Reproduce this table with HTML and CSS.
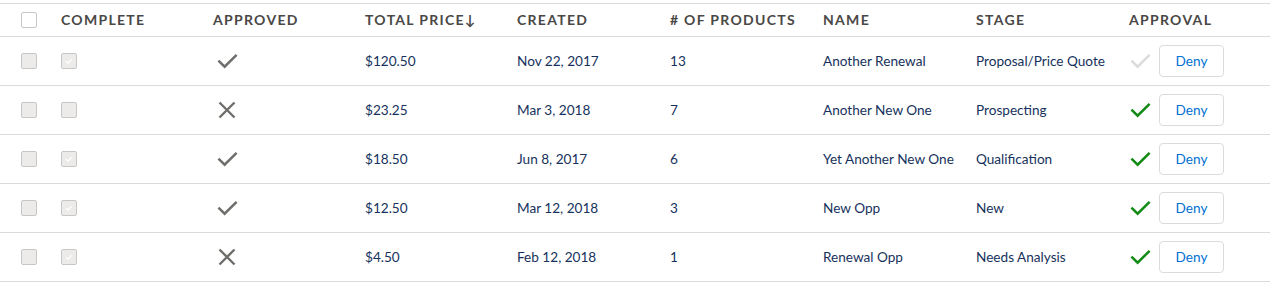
FILE: index.html
```html
<!DOCTYPE html>
<html>
<head>
<meta charset="utf-8">
<link rel="stylesheet" href="styles.css">
</head>
<body>
<table class="grid">
  <colgroup>
    <col class="c-sel"><col class="c-std"><col class="c-std"><col class="c-std"><col class="c-w"><col class="c-w"><col class="c-w"><col class="c-w"><col>
  </colgroup>
  <thead>
    <tr>
      <th class="sel"><span class="cb cb-head"></span></th>
      <th>Complete</th>
      <th>Approved</th>
      <th>Total Price<span class="arrow">↓</span></th>
      <th>Created</th>
      <th># of Products</th>
      <th>Name</th>
      <th>Stage</th>
      <th>Approval</th>
    </tr>
  </thead>
  <tbody>
    <tr>
      <td class="sel"><span class="cb cb-dis"></span></td>
      <td class="ic"><span class="cb cb-dis cb-checked"><svg viewBox="0 0 16 16"><path d="M4.5 8.2l2.3 2.2 4.7-4.6" /></svg></span></td>
      <td class="ic"><svg class="ico-check" viewBox="0 0 24 16"><path d="M2.5 7.5l6.5 6.5L21.5 1.5"/></svg></td>
      <td>$120.50</td>
      <td>Nov 22, 2017</td>
      <td>13</td>
      <td>Another Renewal</td>
      <td>Proposal/Price Quote</td>
      <td class="ic"><div class="appr"><svg class="ico-check light" viewBox="0 0 24 16"><path d="M2.5 7.5l6.5 6.5L21.5 1.5"/></svg><button class="btn">Deny</button></div></td>
    </tr>
    <tr>
      <td class="sel"><span class="cb cb-dis"></span></td>
      <td class="ic"><span class="cb cb-dis"></span></td>
      <td class="ic"><svg class="ico-x" viewBox="0 0 18 18"><path d="M1.5 1.5l15 15M16.5 1.5l-15 15"/></svg></td>
      <td>$23.25</td>
      <td>Mar 3, 2018</td>
      <td>7</td>
      <td>Another New One</td>
      <td>Prospecting</td>
      <td class="ic"><div class="appr"><svg class="ico-check green" viewBox="0 0 24 16"><path d="M2.5 7.5l6.5 6.5L21.5 1.5"/></svg><button class="btn">Deny</button></div></td>
    </tr>
    <tr>
      <td class="sel"><span class="cb cb-dis"></span></td>
      <td class="ic"><span class="cb cb-dis cb-checked"><svg viewBox="0 0 16 16"><path d="M4.5 8.2l2.3 2.2 4.7-4.6" /></svg></span></td>
      <td class="ic"><svg class="ico-check" viewBox="0 0 24 16"><path d="M2.5 7.5l6.5 6.5L21.5 1.5"/></svg></td>
      <td>$18.50</td>
      <td>Jun 8, 2017</td>
      <td>6</td>
      <td>Yet Another New One</td>
      <td>Qualification</td>
      <td class="ic"><div class="appr"><svg class="ico-check green" viewBox="0 0 24 16"><path d="M2.5 7.5l6.5 6.5L21.5 1.5"/></svg><button class="btn">Deny</button></div></td>
    </tr>
    <tr>
      <td class="sel"><span class="cb cb-dis"></span></td>
      <td class="ic"><span class="cb cb-dis cb-checked"><svg viewBox="0 0 16 16"><path d="M4.5 8.2l2.3 2.2 4.7-4.6" /></svg></span></td>
      <td class="ic"><svg class="ico-check" viewBox="0 0 24 16"><path d="M2.5 7.5l6.5 6.5L21.5 1.5"/></svg></td>
      <td>$12.50</td>
      <td>Mar 12, 2018</td>
      <td>3</td>
      <td>New Opp</td>
      <td>New</td>
      <td class="ic"><div class="appr"><svg class="ico-check green" viewBox="0 0 24 16"><path d="M2.5 7.5l6.5 6.5L21.5 1.5"/></svg><button class="btn">Deny</button></div></td>
    </tr>
    <tr>
      <td class="sel"><span class="cb cb-dis"></span></td>
      <td class="ic"><span class="cb cb-dis cb-checked"><svg viewBox="0 0 16 16"><path d="M4.5 8.2l2.3 2.2 4.7-4.6" /></svg></span></td>
      <td class="ic"><svg class="ico-x" viewBox="0 0 18 18"><path d="M1.5 1.5l15 15M16.5 1.5l-15 15"/></svg></td>
      <td>$4.50</td>
      <td>Feb 12, 2018</td>
      <td>1</td>
      <td>Renewal Opp</td>
      <td>Needs Analysis</td>
      <td class="ic"><div class="appr"><svg class="ico-check green" viewBox="0 0 24 16"><path d="M2.5 7.5l6.5 6.5L21.5 1.5"/></svg><button class="btn">Deny</button></div></td>
    </tr>
  </tbody>
</table>
</body>
</html>
```

FILE: styles.css
```css
html, body {
  margin: 0;
  padding: 0;
  background: #ffffff;
}
body {
  padding-top: 3px;
  font-family: "Lato", "Liberation Sans", sans-serif;
  font-size: 13.6px;
  color: #16325c;
}
.grid {
  width: 1270px;
  border-collapse: collapse;
  table-layout: fixed;
}
.c-sel { width: 53px; }
.c-std { width: 152px; }
.c-w { width: 153px; }

.grid th {
  height: 31px;
  padding: 0 8px 1px;
  text-align: left;
  font-weight: 700;
  font-size: 14px;
  letter-spacing: 1.3px;
  text-transform: uppercase;
  color: #4a4846;
  border-top: 1px solid #dddbda;
  border-bottom: 1px solid #dddbda;
  white-space: nowrap;
  vertical-align: middle;
}
.grid th.sel {
  height: 32px;
  padding-bottom: 0;
}
.grid td {
  height: 47px;
  padding: 0 8px 1px;
  border-bottom: 1px solid #dddbda;
  vertical-align: middle;
  white-space: nowrap;
}
.grid td.ic {
  height: 48px;
  padding-bottom: 0;
}
.grid .sel {
  padding-left: 21px;
  padding-right: 0;
}
.grid td.sel {
  height: 48px;
  padding-bottom: 0;
}
.arrow {
  font-weight: 700;
  letter-spacing: 0;
  margin-left: 0;
}

.cb {
  display: block;
  box-sizing: border-box;
  width: 16px;
  height: 16px;
  border: 1px solid #c9c7c5;
  border-radius: 2px;
  background: #ffffff;
}
.cb-dis {
  background: #ecebea;
}
.cb-checked svg {
  display: block;
  width: 14px;
  height: 14px;
  fill: none;
  stroke: #ffffff;
  stroke-width: 1.4;
}

.ico-check {
  display: block;
  width: 23px;
  height: 16px;
  margin-left: 3px;
  fill: none;
  stroke: #706e6b;
  stroke-width: 2.6;
}
.ico-check.light {
  stroke: #dddbda;
  margin-left: 0;
}
.ico-check.green {
  stroke: #128a14;
  margin-left: 0;
}
.ico-x {
  display: block;
  width: 18px;
  height: 18px;
  margin-left: 5px;
  fill: none;
  stroke: #706e6b;
  stroke-width: 2.4;
}

.appr {
  display: flex;
  align-items: center;
  gap: 7px;
}
.btn {
  box-sizing: border-box;
  width: 65px;
  height: 32px;
  padding: 0;
  border: 1px solid #dddbda;
  border-radius: 4px;
  background: #ffffff;
  color: #0070d2;
  font-family: "Lato", "Liberation Sans", sans-serif;
  font-size: 13.6px;
}
```
